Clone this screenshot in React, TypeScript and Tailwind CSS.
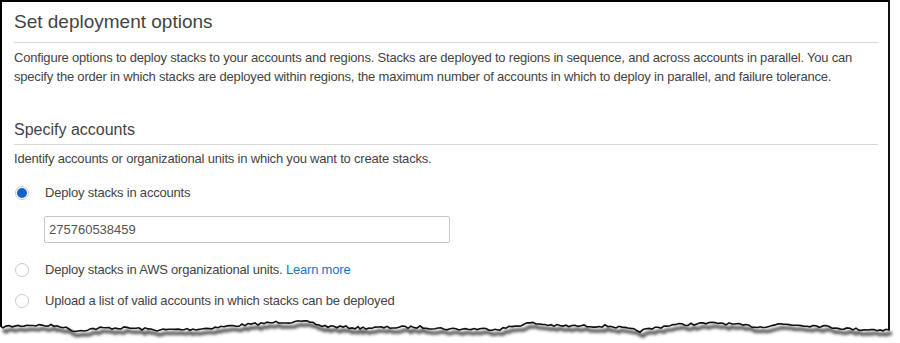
const anchors: [number, number][] = [
  [0, 327], [30, 325], [60, 326], [75, 331], [100, 328], [130, 328], [160, 330],
  [200, 329], [230, 326], [255, 324], [280, 322], [310, 322], [322, 326], [360, 328],
  [420, 327], [450, 329], [500, 329], [530, 323], [560, 326], [610, 326], [640, 331],
  [670, 325], [720, 323], [740, 325], [760, 327], [780, 324], [820, 326], [850, 329],
  [889, 330],
];

// jagged torn-paper edge, seeded so it draws the same every time
const buildEdge = () => {
  let seed = 7;
  const rand = () => {
    seed = (seed * 16807) % 2147483647;
    return seed / 2147483647;
  };
  const pts: [number, number][] = [];
  for (let i = 0; i < anchors.length - 1; i++) {
    const [x0, y0] = anchors[i];
    const [x1, y1] = anchors[i + 1];
    for (let x = x0; x < x1; x += 3) {
      const t = (x - x0) / (x1 - x0);
      const y = y0 + (y1 - y0) * t + (rand() - 0.5) * 2.6;
      pts.push([x, Math.round(y * 10) / 10]);
    }
  }
  pts.push(anchors[anchors.length - 1]);
  return pts;
};

const edge = buildEdge();
const line = edge.map(([x, y], i) => `${i ? 'L' : 'M'}${x} ${y}`).join(' ');
const fill = `${line} L889 343 L0 343 Z`;

const TornEdge = () => (
  <svg className="absolute left-0 top-0 pointer-events-none" width={900} height={343} viewBox="0 0 900 343">
    <defs>
      <filter id="blur" x="-5%" y="-50%" width="110%" height="200%">
        <feGaussianBlur stdDeviation="1.6" />
      </filter>
    </defs>
    <path d={fill} fill="#fff" />
    <rect x={889} y={329} width={11} height={14} fill="#fff" />
    <path d={line} transform="translate(3 4)" fill="none" stroke="#555" strokeWidth={3.5} filter="url(#blur)" />
    <path d="M889 0 L889 330" transform="translate(4 3)" fill="none" stroke="#666" strokeWidth={4} filter="url(#blur)" />
    <path d={line} fill="none" stroke="#111" strokeWidth={1.6} />
    <path d="M889 0 L889 330.5" fill="none" stroke="#111" strokeWidth={2} />
  </svg>
);

const Radio = ({ checked }: { checked?: boolean }) => (
  <span className="w-[14px] h-[14px] rounded-full border border-[#c9c9c9] bg-white flex items-center justify-center shrink-0">
    {checked && <span className="w-[10px] h-[10px] rounded-full bg-[#0f66c6]" />}
  </span>
);

const App = () => {
  return (
    <div className="relative w-[900px] h-[343px] bg-white overflow-hidden font-['Liberation_Sans',Arial,sans-serif]">
      <div className="w-[889px] h-[343px] border-l-2 border-t-2 border-black bg-white pl-3 pr-[11px] pt-2 text-[#444]">
        <h1 className="text-[19px] leading-[24px] pb-2 border-b border-[#d9d9d9]">Set deployment options</h1>
        <p className="mt-[5px] text-[13px] leading-[19px] tracking-[-0.2px]">
          Configure options to deploy stacks to your accounts and regions. Stacks are deployed to regions in sequence, and across accounts in parallel. You can specify the order in which stacks are deployed within regions, the maximum number of accounts in which to deploy in parallel, and failure tolerance.
        </p>
        <h2 className="mt-[34px] text-[16px] leading-[20px] pb-[4px] border-b border-[#d9d9d9]">Specify accounts</h2>
        <p className="mt-[5px] text-[13px] leading-[18px] tracking-[-0.2px]">Identify accounts or organizational units in which you want to create stacks.</p>

        <div className="mt-4 flex items-center text-[13px] leading-[18px] tracking-[-0.2px]">
          <span className="w-[31px] pl-px"><Radio checked /></span>
          <span>Deploy stacks in accounts</span>
        </div>
        <div className="mt-[14px] ml-[30px] w-[406px] h-[27px] border border-[#c8c8c8] rounded-[2px] flex items-center px-[4px] text-[13px] text-[#555]">
          275760538459
        </div>

        <div className="mt-[18px] flex items-center text-[13px] leading-[18px] tracking-[-0.2px]">
          <span className="w-[31px] pl-px"><Radio /></span>
          <span>
            Deploy stacks in AWS organizational units. <span className="text-[#1a73c9]">Learn more</span>
          </span>
        </div>
        <div className="mt-[13px] flex items-center text-[13px] leading-[18px] tracking-[-0.2px]">
          <span className="w-[31px] pl-px"><Radio /></span>
          <span>Upload a list of valid accounts in which stacks can be deployed</span>
        </div>
      </div>
      <TornEdge />
    </div>
  );
};

export default App;
